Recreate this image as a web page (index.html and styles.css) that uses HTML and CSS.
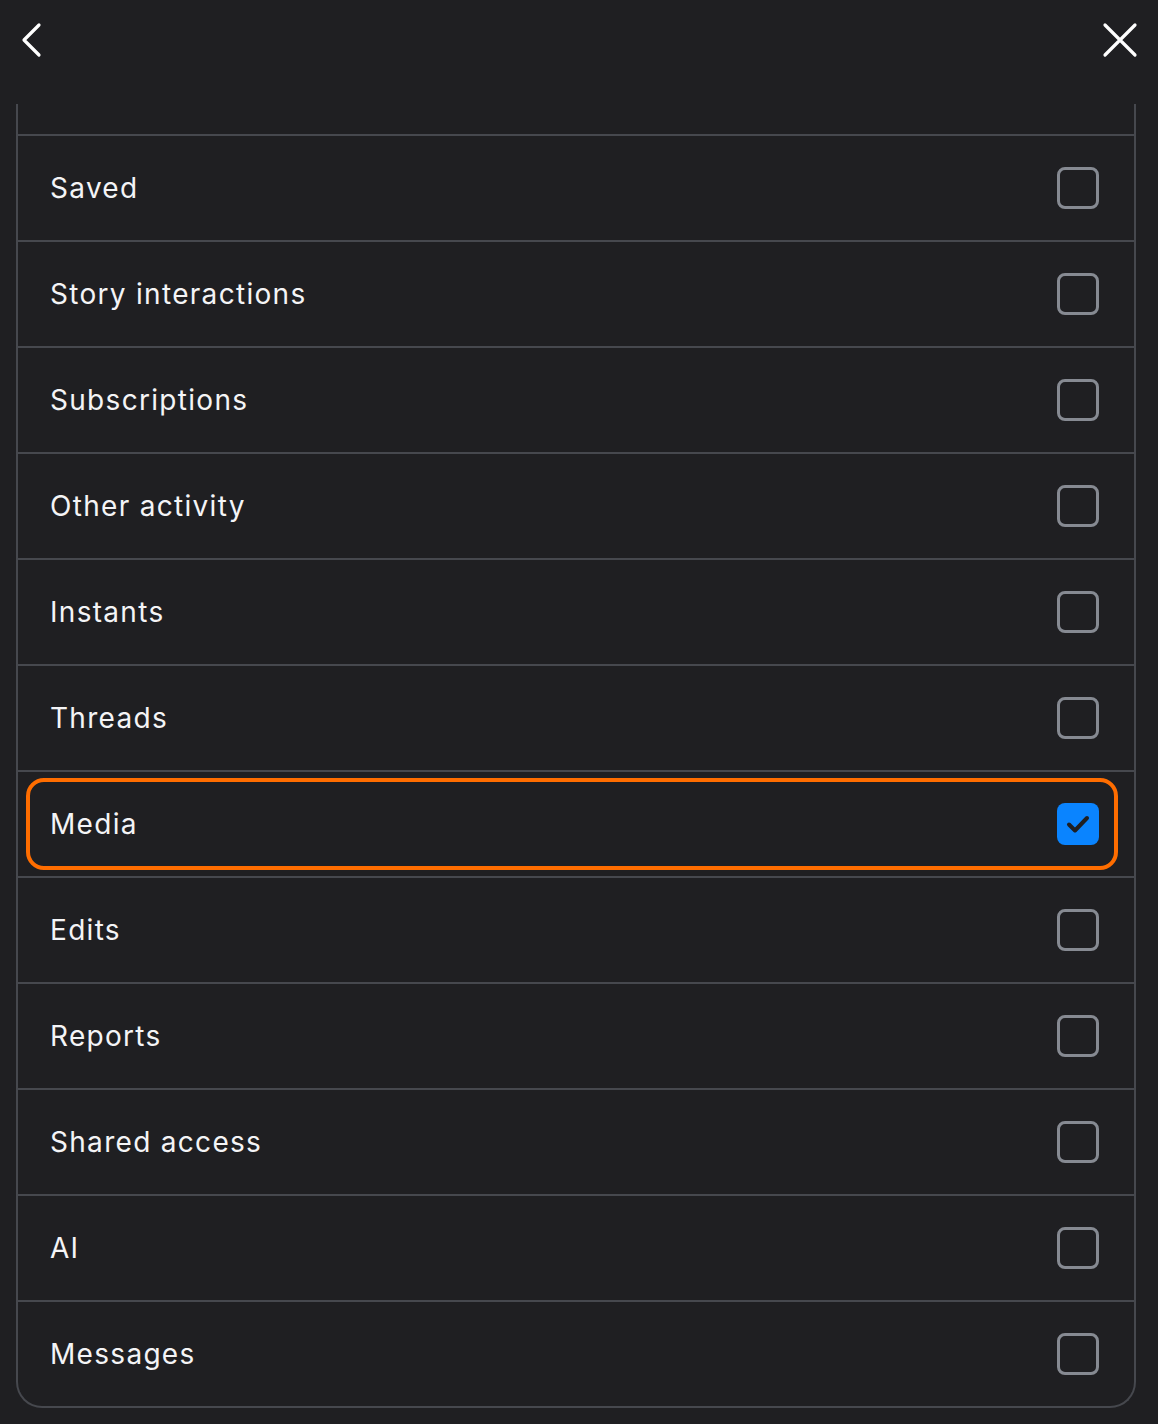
FILE: index.html
```html
<!DOCTYPE html>
<html lang="en">
<head>
    <meta charset="UTF-8">
    <meta name="viewport" content="width=device-width, initial-scale=1.0">
    <title>Activity types</title>
    <link rel="stylesheet" href="styles.css">
</head>
<body>
    <div class="top-bar">
        <button class="icon-btn" aria-label="Back">
            <svg width="24" height="36" viewBox="0 0 24 36"><path d="M19 3 L4 18 L19 33" fill="none" stroke="#fff" stroke-width="3.2" stroke-linecap="round" stroke-linejoin="round"/></svg>
        </button>
        <button class="icon-btn" aria-label="Close">
            <svg width="36" height="36" viewBox="0 0 36 36"><path d="M3 3 L33 33 M33 3 L3 33" fill="none" stroke="#fff" stroke-width="3.2" stroke-linecap="round"/></svg>
        </button>
    </div>
    <div class="list-box">
        <div class="list-top"></div>
        <div class="list-row"><span>Saved</span><span class="check"></span></div>
        <div class="list-row"><span>Story interactions</span><span class="check"></span></div>
        <div class="list-row"><span>Subscriptions</span><span class="check"></span></div>
        <div class="list-row"><span>Other activity</span><span class="check"></span></div>
        <div class="list-row"><span>Instants</span><span class="check"></span></div>
        <div class="list-row"><span>Threads</span><span class="check"></span></div>
        <div class="list-row selected">
            <span>Media</span>
            <span class="check checked">
                <svg width="42" height="42" viewBox="0 0 42 42"><path d="M12 21.5 L18 27.5 L30 15" fill="none" stroke="#1f1f22" stroke-width="4" stroke-linecap="round" stroke-linejoin="round"/></svg>
            </span>
            <div class="highlight"></div>
        </div>
        <div class="list-row"><span>Edits</span><span class="check"></span></div>
        <div class="list-row"><span>Reports</span><span class="check"></span></div>
        <div class="list-row"><span>Shared access</span><span class="check"></span></div>
        <div class="list-row"><span>AI</span><span class="check"></span></div>
        <div class="list-row last"><span>Messages</span><span class="check"></span></div>
    </div>
</body>
</html>
```

FILE: styles.css
```css
body {
    margin: 0;
    background-color: #1f1f22;
    font-family: Inter, "Noto Sans", sans-serif;
    color: #f4f4f6;
    height: 1424px;
    overflow: hidden;
}
.top-bar {
    display: flex;
    justify-content: space-between;
    align-items: center;
    height: 80px;
    padding: 0 20px 0 20px;
    margin-bottom: 24px;
}
.icon-btn {
    background: none;
    border: none;
    padding: 0;
    display: flex;
    cursor: pointer;
}
.list-box {
    margin: 0 22px 0 16px;
    border: 2px solid #46484e;
    border-top: none;
    border-radius: 0 0 26px 26px;
}
.list-top {
    height: 30px;
    border-bottom: 2px solid #46484e;
}
.list-row {
    position: relative;
    display: flex;
    justify-content: space-between;
    align-items: center;
    height: 104px;
    padding: 0 35px 0 32px;
    border-bottom: 2px solid #46484e;
    font-size: 28px;
    letter-spacing: 1.3px;
}
.list-row.last {
    border-bottom: none;
}
.check {
    width: 36px;
    height: 36px;
    border: 3px solid #868a92;
    border-radius: 8px;
}
.check.checked {
    width: 42px;
    height: 42px;
    border: none;
    background-color: #0a84ff;
    display: flex;
}
.highlight {
    position: absolute;
    left: 8px;
    right: 16px;
    top: 6px;
    bottom: 6px;
    border: 4px solid #ff6d00;
    border-radius: 18px;
}
```
